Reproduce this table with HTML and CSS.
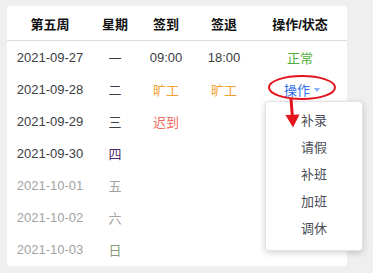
FILE: index.html
```html
<!DOCTYPE html>
<html lang="zh">
<head>
<meta charset="utf-8">
<link rel="stylesheet" href="styles.css">
</head>
<body>
<div class="stage">
  <div class="card">
    <div class="row head">
      <div class="c1">第五周</div><div class="c2">星期</div><div class="c3">签到</div><div class="c4">签退</div><div class="c5">操作/状态</div>
    </div>
    <div class="row">
      <div class="c1">2021-09-27</div><div class="c2">一</div><div class="c3">09:00</div><div class="c4">18:00</div><div class="c5 ok">正常</div>
    </div>
    <div class="row">
      <div class="c1">2021-09-28</div><div class="c2">二</div><div class="c3 absent">旷工</div><div class="c4 absent">旷工</div><div class="c5"><span class="op">操作<span class="tri"></span></span></div>
    </div>
    <div class="row">
      <div class="c1">2021-09-29</div><div class="c2">三</div><div class="c3 late">迟到</div><div class="c4"></div><div class="c5"></div>
    </div>
    <div class="row">
      <div class="c1">2021-09-30</div><div class="c2 thu">四</div><div class="c3"></div><div class="c4"></div><div class="c5"></div>
    </div>
    <div class="row future">
      <div class="c1">2021-10-01</div><div class="c2">五</div><div class="c3"></div><div class="c4"></div><div class="c5"></div>
    </div>
    <div class="row future">
      <div class="c1">2021-10-02</div><div class="c2">六</div><div class="c3"></div><div class="c4"></div><div class="c5"></div>
    </div>
    <div class="row future">
      <div class="c1">2021-10-03</div><div class="c2 sun">日</div><div class="c3"></div><div class="c4"></div><div class="c5"></div>
    </div>
  </div>
  <ul class="menu">
    <li>补录</li><li>请假</li><li>补班</li><li>加班</li><li>调休</li>
  </ul>
  <svg class="mark" width="373" height="273" viewBox="0 0 373 273">
    <ellipse cx="302" cy="87.5" rx="33" ry="11.5" fill="none" stroke="#e5131c" stroke-width="2"/>
    <line x1="291" y1="99" x2="292.5" y2="118" stroke="#e5131c" stroke-width="3" stroke-linecap="round"/>
    <polygon points="285.5,115 299.5,114.5 293,127.5" fill="#e5131c"/>
  </svg>
</div>
</body>
</html>
```

FILE: styles.css
```css
html, body { margin: 0; padding: 0; }
body {
  background: #efefef;
  font-family: "Liberation Sans", "Noto Sans CJK SC", sans-serif;
  font-size: 13px;
  color: #3a3d42;
}
.stage {
  position: relative;
  width: 373px;
  height: 273px;
  padding: 6px 0 0 7px;
  box-sizing: border-box;
}
.card {
  width: 340px;
  height: 260px;
  background: #fff;
  border-radius: 4px;
  overflow: hidden;
}
.row {
  display: grid;
  grid-template-columns: 86px 44px 58px 58px 94px;
  height: 32px;
  align-items: center;
  text-align: center;
}
.row.head {
  height: 34px;
  font-weight: bold;
  color: #111;
  border-bottom: 1px solid #dcdcdc;
}
.ok { color: #4cae3c; }
.absent { color: #f3a12e; }
.late { color: #f2675c; }
.thu { color: #4a2a6a; }
.future { color: #a3a3a3; }
.sun { color: #8a9a7a; }
.op {
  color: #2f6fe8;
  display: inline-flex;
  align-items: center;
  gap: 4px;
  padding-left: 4px;
}
.tri {
  width: 0;
  height: 0;
  border-left: 3.5px solid transparent;
  border-right: 3.5px solid transparent;
  border-top: 4px solid #86aef0;
  margin-top: 1px;
}
.menu {
  position: absolute;
  left: 265px;
  top: 101px;
  width: 98px;
  height: 150px;
  margin: 0;
  padding: 5px 0 10px;
  list-style: none;
  background: #fff;
  border: 1px solid #e4e4e4;
  border-radius: 4px;
  box-shadow: 0 2px 6px rgba(0,0,0,0.18);
  box-sizing: border-box;
}
.menu li {
  height: 27px;
  line-height: 27px;
  text-align: center;
  color: #4a4d55;
}
.mark {
  position: absolute;
  left: 0;
  top: 0;
  pointer-events: none;
}
```
